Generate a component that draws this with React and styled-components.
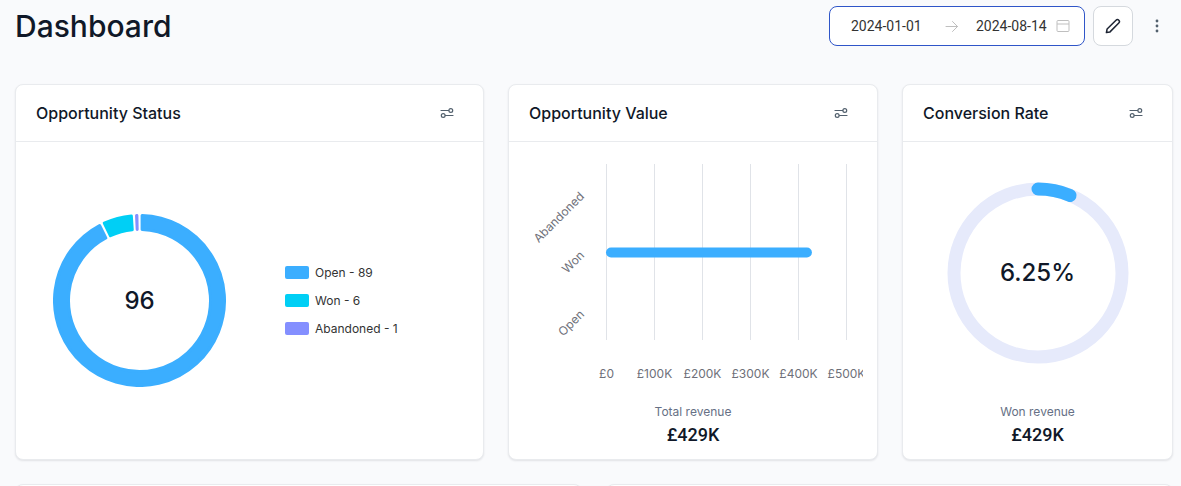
import React from "react";
import styled, { createGlobalStyle } from "styled-components";

const GlobalStyle = createGlobalStyle`
  * {
    box-sizing: border-box;
  }

  body {
    margin: 0;
    overflow: hidden;
    background-color: #f9fafc;
    color: #101828;
    font-family: Inter, "Liberation Sans", sans-serif;
  }
`;

const statuses = [
  { name: "Open", count: 89, color: "#3baeff" },
  { name: "Won", count: 6, color: "#00cff5" },
  { name: "Abandoned", count: 1, color: "#848fff" },
];

const ticks = ["£0", "£100K", "£200K", "£300K", "£400K", "£500K"];

const values = [
  { name: "Abandoned", amount: 0 },
  { name: "Won", amount: 429 },
  { name: "Open", amount: 0 },
];

const FilterIcon = () => (
  <svg width="14" height="10" viewBox="0 0 14 10" fill="none" stroke="currentColor" strokeWidth="1.2" strokeLinecap="round">
    <path d="M1 2.5h7.6M5.4 7.5H13" />
    <circle cx="10.8" cy="2.5" r="1.9" />
    <circle cx="3.2" cy="7.5" r="1.9" />
  </svg>
);

const PencilIcon = () => (
  <svg width="16" height="16" viewBox="0 0 16 16" fill="none" stroke="currentColor" strokeWidth="1.5" strokeLinejoin="round">
    <path d="M1.4 14.6l.7-3.6 8.9-8.8a1.95 1.95 0 0 1 2.8 2.8L5 13.9z" />
  </svg>
);

const ArrowIcon = () => (
  <svg width="14" height="12" viewBox="0 0 14 12" fill="none" stroke="currentColor" strokeWidth="1" strokeLinecap="round">
    <path d="M1 6.5h11.5M7.5 1.5l5 5-5 5" />
  </svg>
);

const CalendarIcon = () => (
  <svg width="14" height="14" viewBox="0 0 14 14" fill="none" stroke="currentColor">
    <rect x="1" y="1.5" width="12" height="11" rx="1" />
    <path d="M1 5h12" />
  </svg>
);

const DotsIcon = () => (
  <svg width="4" height="14" viewBox="0 0 4 14" fill="currentColor">
    <circle cx="2" cy="2" r="1.4" />
    <circle cx="2" cy="7" r="1.4" />
    <circle cx="2" cy="12" r="1.4" />
  </svg>
);

const point = (r, a) => `${86.5 + r * Math.sin(a)} ${86.5 - r * Math.cos(a)}`;

// ring slice, pulled in on every side so the round joined stroke fills it back out
const slice = (from, to) => {
  const outer = 85;
  const inner = 71;
  const mid = (from + to) / 2;
  const start = (r) => Math.min(from + 2.6 / r, mid);
  const end = (r) => Math.max(to - 2.6 / r, mid);
  const large = to - from > Math.PI ? 1 : 0;
  return `M${point(outer, start(outer))}
    A${outer} ${outer} 0 ${large} 1 ${point(outer, end(outer))}
    L${point(inner, end(inner))}
    A${inner} ${inner} 0 ${large} 0 ${point(inner, start(inner))}Z`;
};

const StatusDonut = () => {
  const total = statuses.reduce((sum, s) => sum + s.count, 0);
  let angle = 0;
  return (
    <Ring>
      <svg width="173" height="173" viewBox="0 0 173 173">
        {statuses.map((s) => {
          const from = angle;
          angle += (s.count / total) * Math.PI * 2;
          return (
            <path key={s.name} d={slice(from, angle)} fill={s.color} stroke={s.color} strokeWidth="3" strokeLinejoin="round" />
          );
        })}
      </svg>
      <RingValue>{total}</RingValue>
    </Ring>
  );
};

const ValueChart = () => (
  <svg width="340" height="260" viewBox="0 0 340 260">
    {ticks.map((t, i) => (
      <g key={t}>
        <line x1={83.5 + i * 48} x2={83.5 + i * 48} y1="22" y2="198" stroke="#e0e3e8" />
        <AxisText x={83.5 + i * 48} y="236" textAnchor="middle">{t}</AxisText>
      </g>
    ))}
    {values.map((v, i) => (
      <g key={v.name}>
        <AxisText transform={`translate(62 ${55 + i * 59}) rotate(-45)`} textAnchor="end">{v.name}</AxisText>
        {v.amount > 0 && (
          <rect x="83" y={46.5 + i * 59} width={v.amount * 0.48} height="10" rx="5" fill="#3baeff" />
        )}
      </g>
    ))}
  </svg>
);

const RateGauge = () => (
  <Ring>
    <svg width="182" height="182" viewBox="0 0 182 182" fill="none" strokeWidth="13">
      <circle cx="91" cy="91" r="84" stroke="#e6eafb" />
      <path d="M91 7A84 84 0 0 1 123.1 13.4" stroke="#3baeff" strokeLinecap="round" />
    </svg>
    <RingValue>6.25%</RingValue>
  </Ring>
);

const DashboardCard = ({ title, children }) => (
  <Card>
    <CardHeader>
      <CardTitle>{title}</CardTitle>
      <IconButton aria-label={`Filter ${title}`}>
        <FilterIcon />
      </IconButton>
    </CardHeader>
    {children}
  </Card>
);

const App = () => {
  return (
    <Page>
      <GlobalStyle />
      <TopBar>
        <Heading>Dashboard</Heading>
        <Actions>
          <DateRange>
            <DateInput aria-label="Start date" defaultValue="2024-01-01" />
            <RangeArrow>
              <ArrowIcon />
            </RangeArrow>
            <DateInput aria-label="End date" defaultValue="2024-08-14" />
            <RangeIcon>
              <CalendarIcon />
            </RangeIcon>
          </DateRange>
          <EditButton aria-label="Edit dashboard">
            <PencilIcon />
          </EditButton>
          <IconButton aria-label="More options">
            <DotsIcon />
          </IconButton>
        </Actions>
      </TopBar>

      <Cards>
        <DashboardCard title="Opportunity Status">
          <StatusBody>
            <StatusDonut />
            <Legend>
              {statuses.map((s) => (
                <LegendItem key={s.name} $color={s.color}>
                  {s.name} - {s.count}
                </LegendItem>
              ))}
            </Legend>
          </StatusBody>
        </DashboardCard>

        <DashboardCard title="Opportunity Value">
          <ChartBody>
            <ValueChart />
          </ChartBody>
          <Summary>
            <SummaryLabel>Total revenue</SummaryLabel>
            <SummaryValue>£429K</SummaryValue>
          </Summary>
        </DashboardCard>

        <DashboardCard title="Conversion Rate">
          <ChartBody>
            <RateGauge />
          </ChartBody>
          <Summary>
            <SummaryLabel>Won revenue</SummaryLabel>
            <SummaryValue>£429K</SummaryValue>
          </Summary>
        </DashboardCard>
      </Cards>

      <LowerCards>
        <Card />
        <Card />
      </LowerCards>
    </Page>
  );
};

const Page = styled.main`
  padding: 6px 8px 0 15px;
`;

const TopBar = styled.header`
  display: flex;
  justify-content: space-between;
  align-items: center;
  height: 40px;
  margin-bottom: 38px;
`;

const Heading = styled.h1`
  margin: 0;
  font-size: 30px;
  line-height: 40px;
  font-weight: 500;
`;

const Actions = styled.div`
  display: flex;
  align-items: center;
  gap: 8px;
`;

const DateRange = styled.div`
  display: flex;
  align-items: center;
  width: 256px;
  height: 40px;
  padding: 0 14px 0 21px;
  border: 1px solid #2f55c8;
  border-radius: 8px;
  background-color: #fff;
  color: #bfbfbf;
`;

const DateInput = styled.input`
  width: 72px;
  padding: 0;
  border: none;
  outline: none;
  background: none;
  color: #333;
  font-family: Roboto, sans-serif;
  font-size: 14px;
  line-height: 20px;
`;

const RangeArrow = styled.span`
  display: flex;
  flex: 1;
  justify-content: center;
  padding-left: 4px;
`;

const RangeIcon = styled.span`
  display: flex;
  padding-left: 8px;
`;

const IconButton = styled.button`
  display: flex;
  align-items: center;
  justify-content: center;
  width: 32px;
  height: 32px;
  padding: 0;
  border: none;
  background: none;
  color: #52606d;
`;

const EditButton = styled(IconButton)`
  width: 40px;
  height: 40px;
  border: 1px solid #d5d9de;
  border-radius: 8px;
  background-color: #fff;
  color: #1d2433;
`;

const Cards = styled.div`
  display: grid;
  grid-template-columns: 469fr 370fr 271fr;
  gap: 24px;
  margin-bottom: 24px;
`;

const LowerCards = styled(Cards)`
  grid-template-columns: 1fr 1fr;
`;

const Card = styled.section`
  display: flex;
  flex-direction: column;
  min-height: 376px;
  border: 1px solid #e9ebee;
  border-radius: 8px;
  background-color: #fff;
  box-shadow: 0 1px 2px rgba(16, 24, 40, 0.1);
`;

const CardHeader = styled.div`
  display: flex;
  align-items: center;
  justify-content: space-between;
  height: 57px;
  padding: 0 20px;
  border-bottom: 1px solid #e9ebee;
`;

const CardTitle = styled.h2`
  margin: 0;
  font-size: 16px;
  line-height: 24px;
  font-weight: 500;
`;

const StatusBody = styled.div`
  display: flex;
  flex: 1;
  align-items: center;
  gap: 59px;
  padding: 0 37px;
`;

const ChartBody = styled.div`
  display: flex;
  flex: 1;
  align-items: flex-start;
  justify-content: center;

  > div {
    align-self: center;
  }
`;

const Ring = styled.div`
  display: grid;
  place-items: center;

  > * {
    grid-area: 1 / 1;
  }
`;

const RingValue = styled.span`
  font-size: 24px;
  line-height: 32px;
  font-weight: 500;
`;

const Legend = styled.ul`
  display: flex;
  flex-direction: column;
  gap: 12px;
  margin: 0;
  padding: 0;
  list-style: none;
`;

const LegendItem = styled.li`
  display: flex;
  align-items: center;
  gap: 6px;
  color: #333;
  font-size: 12px;
  line-height: 16px;
  white-space: pre;

  &::before {
    content: "";
    width: 24px;
    height: 13px;
    border-radius: 2px;
    background-color: ${(props) => props.$color};
  }
`;

const AxisText = styled.text`
  fill: #6e7079;
  font-size: 12px;
`;

const Summary = styled.div`
  padding-bottom: 10px;
  text-align: center;
`;

const SummaryLabel = styled.p`
  margin: 0;
  color: #667085;
  font-size: 12px;
  line-height: 18px;
`;

const SummaryValue = styled.p`
  margin: 0;
  font-family: Roboto, sans-serif;
  font-size: 18px;
  line-height: 28px;
  font-weight: 500;
`;

export default App;
